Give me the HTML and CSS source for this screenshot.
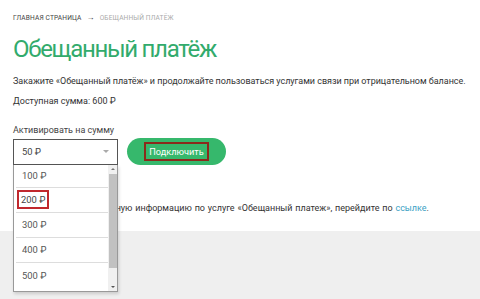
FILE: index.html
```html
<!DOCTYPE html>
<html lang="ru">
<head>
<meta charset="utf-8">
<link rel="stylesheet" href="styles.css">
</head>
<body>
<div class="page">
  <div class="crumbs"><span class="crumb-home">Главная страница</span><span class="crumb-arrow">→</span><span class="crumb-cur">Обещанный платёж</span></div>
  <h1 class="title">Обещанный платёж</h1>
  <p class="text lead">Закажите «Обещанный платёж» и продолжайте пользоваться услугами связи при отрицательном балансе.</p>
  <p class="text sum">Доступная сумма: 600 ₽</p>
  <div class="label">Активировать на сумму</div>
  <div class="controls">
    <div class="select-wrap">
      <div class="select"><span>50 ₽</span><span class="caret"></span></div>
      <div class="dropdown">
        <div class="options">
          <div class="opt">100 ₽</div>
          <div class="opt"><span class="hl">200 ₽</span></div>
          <div class="opt">300 ₽</div>
          <div class="opt">400 ₽</div>
          <div class="opt">500 ₽</div>
        </div>
        <div class="scrollbar">
          <span class="sb-up"></span>
          <span class="sb-thumb"></span>
          <span class="sb-down"></span>
        </div>
      </div>
    </div>
    <div class="btn"><span class="btn-text">Подключить</span></div>
  </div>
  <p class="text info">Чтобы получить подробную информацию по услуге «Обещанный платеж», перейдите по <a class="link">ссылке</a>.</p>
</div>
<div class="footer"></div>
</body>
</html>
```

FILE: styles.css
```css
html, body {
  margin: 0;
  padding: 0;
  background: #fff;
}
body {
  font-family: "Roboto", "Noto Sans", sans-serif;
  color: #333;
  width: 480px;
  height: 299px;
  overflow: hidden;
}
.page {
  padding: 13px 13px 0 13px;
  height: 218px;
}
.crumbs {
  font-size: 6.6px;
  text-transform: uppercase;
  letter-spacing: 0.15px;
  display: flex;
  align-items: center;
  height: 9px;
  color: #444;
}
.crumb-arrow {
  margin: 0 5px;
  font-size: 8px;
  color: #333;
}
.crumb-cur {
  color: #aaa;
}
.title {
  margin: 12px 0 0 0;
  font-weight: 400;
  font-size: 24px;
  line-height: 30px;
  letter-spacing: -1.3px;
  color: #32ab6c;
}
.text {
  margin: 0;
  font-size: 9px;
  line-height: 12px;
}
.lead {
  white-space: nowrap;
  letter-spacing: -0.03px;
}
.title + .text {
  margin-top: 11px;
}
.sum {
  margin-top: 8px;
}
.label {
  margin-top: 17px;
  font-size: 9px;
  line-height: 12px;
  color: #444;
}
.controls {
  display: flex;
  align-items: center;
  gap: 9px;
  margin-top: 2px;
}
.select-wrap {
  position: relative;
  width: 105px;
}
.select {
  height: 26px;
  border: 1px solid #555;
  box-sizing: border-box;
  display: flex;
  align-items: center;
  justify-content: space-between;
  padding: 0 8px 0 8px;
  font-size: 9.4px;
  color: #444;
  background: #fff;
}
.caret {
  width: 0;
  height: 0;
  border-left: 3.5px solid transparent;
  border-right: 3.5px solid transparent;
  border-top: 3.5px solid #aaa;
}
.dropdown {
  position: absolute;
  top: 26px;
  left: 0;
  width: 105px;
  height: 127px;
  box-sizing: border-box;
  border: 1px solid #999;
  border-top: none;
  background: #fff;
  display: flex;
  box-shadow: 1px 2px 3px rgba(0,0,0,0.15);
  z-index: 2;
}
.options {
  flex: 1;
  padding-left: 2px;
}
.opt {
  height: 25px;
  box-sizing: border-box;
  border-bottom: 1px solid #ddd;
  display: flex;
  align-items: center;
  padding-left: 6px;
  font-size: 9.4px;
  color: #555;
}
.opt:first-child {
  height: 23px;
}
.opt:last-child {
  border-bottom: none;
}
.hl {
  border: 2px solid #c0282d;
  padding: 2px 2px;
  margin-left: -5px;
  color: #444;
}
.scrollbar {
  width: 9px;
  background: #f0f0f0;
  display: flex;
  flex-direction: column;
  align-items: center;
}
.sb-up {
  margin-top: 3px;
  width: 0;
  height: 0;
  border-left: 2px solid transparent;
  border-right: 2px solid transparent;
  border-bottom: 2px solid #777;
}
.sb-thumb {
  margin-top: 4px;
  width: 8px;
  height: 94px;
  background: #c1c1c1;
}
.sb-down {
  margin-top: auto;
  margin-bottom: 3px;
  width: 0;
  height: 0;
  border-left: 2px solid transparent;
  border-right: 2px solid transparent;
  border-top: 2px solid #555;
}
.btn {
  width: 99px;
  height: 27px;
  border-radius: 14px;
  background: #36b86c;
  display: flex;
  align-items: center;
  justify-content: center;
}
.btn-text {
  color: #fff;
  font-size: 9.2px;
  border: 2px solid #8b2a1c;
  padding: 2px 3px;
  line-height: 11px;
}
.info {
  margin-top: 37px;
  word-spacing: 0.6px;
}
.link {
  color: #3b9fc4;
}
.footer {
  height: 81px;
  background: #efefef;
}
```
